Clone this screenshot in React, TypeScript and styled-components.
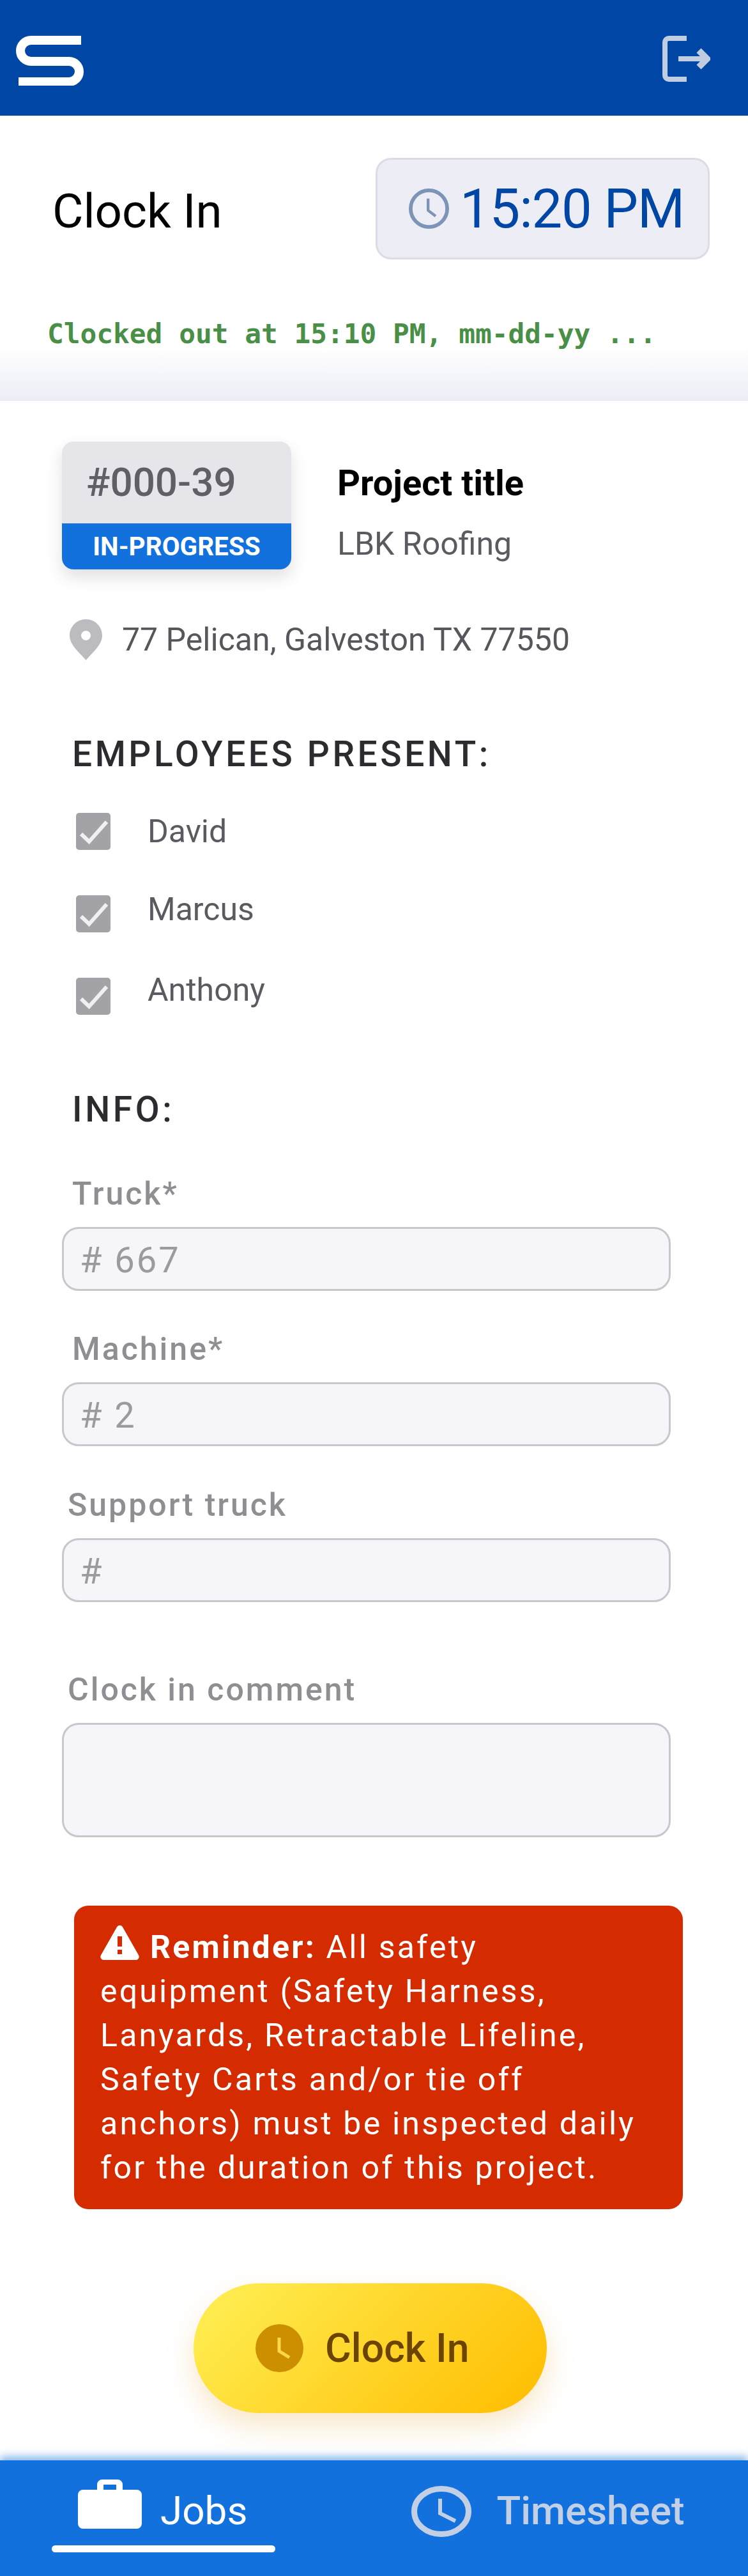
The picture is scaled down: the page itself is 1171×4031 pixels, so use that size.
import styled, { createGlobalStyle } from "styled-components";

const GlobalStyle = createGlobalStyle`
  * {
    box-sizing: border-box;
  }

  body {
    margin: 0;
    background: #fff;
    font-family: Roboto, "Liberation Sans", sans-serif;
  }
`;

const Page = styled.div`
  width: 1171px;
  min-height: 4031px;
  display: flex;
  flex-direction: column;
`;

const Header = styled.header`
  height: 181px;
  padding: 56px 59px 0 25px;
  display: flex;
  align-items: flex-start;
  justify-content: space-between;
  background: #0047a5;
`;

const TitleRow = styled.div`
  padding: 66px 60px 0 82px;
  display: flex;
  align-items: center;
  justify-content: space-between;
`;

const Title = styled.h1`
  margin: 8px 0 0;
  font-size: 74.5px;
  line-height: 90px;
  font-weight: 400;
  color: #000;
`;

const TimeBox = styled.div`
  width: 523px;
  height: 159px;
  padding: 0 0 0 49px;
  display: flex;
  align-items: center;
  gap: 17px;
  background: #ecedf5;
  border: 3px solid #dcdce6;
  border-radius: 24px;
`;

const TimeText = styled.span`
  font-size: 85px;
  line-height: 100px;
  letter-spacing: -1.2px;
  color: #0047a5;
  white-space: nowrap;
`;

const StatusBar = styled.div`
  height: 221px;
  padding: 91px 0 0 74px;
  background: linear-gradient(#fff 62%, #eceef6 100%);
  border-bottom: 1px solid #e4e5ec;
`;

const StatusText = styled.p`
  margin: 0;
  font-family: "DejaVu Sans Mono", "Liberation Mono", monospace;
  font-size: 42.8px;
  line-height: 50px;
  font-weight: 700;
  color: #4a8f47;
  white-space: nowrap;
`;

const Body = styled.main`
  flex: 1;
  padding: 64px 0 0 97px;
`;

const ProjectRow = styled.div`
  display: flex;
  gap: 72px;
`;

const ProjectCard = styled.div`
  width: 359px;
  height: 200px;
  display: flex;
  flex-direction: column;
  border-radius: 18px;
  overflow: hidden;
  box-shadow: 0 12px 24px rgba(60, 60, 80, 0.16);
`;

const ProjectNumber = styled.div`
  height: 128px;
  padding: 0 0 2px 38px;
  display: flex;
  align-items: center;
  background: #e5e5ea;
  font-size: 62px;
  font-weight: 500;
  color: #5f5f66;
`;

const ProjectStatus = styled.div`
  flex: 1;
  display: flex;
  align-items: center;
  justify-content: center;
  background: #1271dc;
  font-size: 40.5px;
  font-weight: 700;
  color: #fff;
`;

const ProjectInfo = styled.div`
  padding-top: 33px;
`;

const ProjectTitle = styled.div`
  font-size: 56px;
  line-height: 64px;
  font-weight: 700;
  color: #000;
`;

const ProjectClient = styled.div`
  margin-top: 33px;
  font-size: 50px;
  line-height: 60px;
  color: #5a5a60;
`;

const AddressRow = styled.div`
  margin-top: 78px;
  padding-left: 12px;
  display: flex;
  align-items: center;
  gap: 31px;
  font-size: 50px;
  line-height: 64px;
  color: #56565c;
`;

const SectionTitle = styled.h2<{ $top: number }>`
  margin: ${(p) => p.$top}px 0 0 16px;
  font-size: 55px;
  line-height: 60px;
  font-weight: 500;
  letter-spacing: 4.6px;
  color: #2c2c30;
`;

const EmployeeList = styled.div`
  margin-top: 61px;
  padding-left: 22px;
  display: flex;
  flex-direction: column;
  gap: 70px;
`;

const EmployeeRow = styled.label`
  height: 59px;
  display: flex;
  align-items: center;
  gap: 58px;
`;

const CheckBox = styled.span`
  width: 54px;
  height: 58px;
  display: flex;
  background: #a3a3a7;
  border-radius: 5px;
`;

const EmployeeName = styled.span<{ $lift: number }>`
  padding-bottom: ${(p) => p.$lift}px;
  font-size: 50px;
  line-height: 60px;
  color: #5a5a60;
`;

const FieldLabel = styled.label<{ $top: number; $indent: number }>`
  display: block;
  margin: ${(p) => p.$top}px 0 27px ${(p) => p.$indent}px;
  font-size: 50px;
  line-height: 50px;
  font-weight: 500;
  letter-spacing: 3px;
  color: #8e8e93;
`;

const FieldInput = styled.input`
  display: block;
  width: 953px;
  height: 100px;
  padding: 4px 25px 0;
  background: #f6f5f9;
  border: 3px solid #c7c7cc;
  border-radius: 26px;
  outline: none;
  font-family: inherit;
  font-size: 56px;
  letter-spacing: 3px;
  color: #9a9a9f;
`;

const FieldArea = styled.textarea`
  display: block;
  width: 953px;
  height: 179px;
  background: #f6f5f9;
  border: 3px solid #c7c7cc;
  border-radius: 26px;
  outline: none;
  resize: none;
`;

const Reminder = styled.p`
  width: 953px;
  margin: 107px 0 0 19px;
  padding: 30px 70px 30px 41px;
  background: #d42c00;
  border-radius: 22px;
  font-size: 50px;
  line-height: 69px;
  letter-spacing: 3.2px;
  color: #fff;

  strong {
    font-weight: 700;
  }

  svg {
    margin-right: 17px;
    vertical-align: -3px;
  }
`;

const ClockButton = styled.button`
  width: 553px;
  height: 203px;
  margin: 116px 0 74px 206px;
  padding: 0 0 0 97px;
  display: flex;
  align-items: center;
  gap: 34px;
  border: none;
  border-radius: 102px;
  background: linear-gradient(135deg, #ffeb4d 10%, #ffc107 90%);
  box-shadow: 0 20px 44px rgba(230, 170, 60, 0.28);
  font-family: inherit;
  font-size: 62.5px;
  font-weight: 500;
  color: #6b4500;
`;

const TabBar = styled.nav`
  height: 182px;
  padding: 30px 0 0 81px;
  display: flex;
  gap: 172px;
  background: #1271dc;
  box-shadow: 0 -6px 12px rgba(18, 113, 220, 0.5);
`;

const Tab = styled.div`
  display: flex;
  flex-direction: column;
`;

const TabRow = styled.div<{ $gap: number }>`
  height: 90px;
  padding: 0 44px 0 41px;
  display: flex;
  align-items: center;
  gap: ${(p) => p.$gap}px;
`;

const TabLabel = styled.span<{ $active?: boolean }>`
  padding-top: 8px;
  font-size: 62px;
  line-height: 62px;
  font-weight: ${(p) => (p.$active ? 400 : 500)};
  color: ${(p) => (p.$active ? "#fff" : "#c2cfe4")};
`;

const TabMark = styled.div`
  height: 11px;
  margin-top: 13px;
  background: #fff;
  border-radius: 6px;
`;

const TabIcon = styled.svg<{ $top?: number; $bottom?: number }>`
  flex: none;
  margin-top: ${(p) => p.$top ?? 0}px;
  margin-bottom: ${(p) => p.$bottom ?? 0}px;
`;

const Logo = () => (
  <svg width="106" height="78" viewBox="25 56 106 78" fill="none" stroke="#fff" strokeWidth="14">
    <path d="M127 63H48.5A16.5 16.5 0 0 0 48.5 96H108A16 16 0 0 1 108 128H29" />
  </svg>
);

const LogoutIcon = () => (
  <svg width="75" height="72" viewBox="1037 56 75 72" fill="none" stroke="#c0cce0">
    <path d="M1075 60H1047a6 6 0 0 0-6 6V118a6 6 0 0 0 6 6H1075" strokeWidth="8" />
    <path d="M1062 92H1106" strokeWidth="8" />
    <path d="M1094 79L1107 92L1094 105" strokeWidth="10" />
  </svg>
);

const TimeClock = () => (
  <svg width="63" height="63" viewBox="0 0 24 24" fill="none" stroke="#7c94b5" strokeWidth="2.2">
    <circle cx="12" cy="12" r="10.9" />
    <path d="M11.5 6V13L16 16.5" strokeWidth="1.65" />
  </svg>
);

const PinIcon = () => (
  <svg width="51" height="64" viewBox="0 0 51 64">
    <path
      fillRule="evenodd"
      fill="#bcbcc0"
      d="M25.5 0C11.4 0 0 11.4 0 25.5 0 40 15 52 25.5 64 36 52 51 40 51 25.5 51 11.4 39.6 0 25.5 0ZM25.5 18a7.5 7.5 0 1 1 0 15 7.5 7.5 0 0 1 0-15Z"
    />
  </svg>
);

const CheckIcon = () => (
  <svg width="54" height="58" viewBox="0 0 54 58" fill="none" stroke="#f0f0f2" strokeWidth="6">
    <path d="M8 33L20.5 45L48 14" />
  </svg>
);

const WarningIcon = () => (
  <svg width="61" height="55" viewBox="0 0 61 55">
    <path
      fillRule="evenodd"
      fill="#fff"
      d="M26 3.5a5 5 0 0 1 9 0L60 47.5A5 5 0 0 1 56 55H5A5 5 0 0 1 1 47.5ZM27 18V34H34V18ZM27 39V46H34V39Z"
    />
  </svg>
);

const ButtonClock = () => (
  <svg width="75" height="75" viewBox="0 0 75 75">
    <circle cx="37.5" cy="37.5" r="37.5" fill="#cc8f00" />
    <path d="M37 21V42L53 52" fill="none" stroke="#ffd84a" strokeWidth="5" />
  </svg>
);

const BriefcaseIcon = () => (
  <TabIcon $bottom={13} width="100" height="77" viewBox="0 0 100 77">
    <path
      fillRule="evenodd"
      fill="#fff"
      d="M30 16V8a8 8 0 0 1 8-8H62a8 8 0 0 1 8 8V16H92a8 8 0 0 1 8 8V69a8 8 0 0 1-8 8H8a8 8 0 0 1-8-8V24a8 8 0 0 1 8-8ZM40 16H60V8H40Z"
    />
  </TabIcon>
);

const TabClock = () => (
  <TabIcon $top={9} width="94" height="80" viewBox="0 0 94 80" fill="none" stroke="#c2cfe4">
    <ellipse cx="47" cy="40" rx="42.5" ry="35.5" strokeWidth="9" />
    <path d="M45 20V43L69 55" strokeWidth="6" />
  </TabIcon>
);

const employees = [
  { name: "David", lift: 0 },
  { name: "Marcus", lift: 14 },
  { name: "Anthony", lift: 20 },
];

const App = () => {
  return (
    <Page>
      <GlobalStyle />
      <Header>
        <Logo />
        <LogoutIcon />
      </Header>

      <TitleRow>
        <Title>Clock In</Title>
        <TimeBox>
          <TimeClock />
          <TimeText>15:20 PM</TimeText>
        </TimeBox>
      </TitleRow>

      <StatusBar>
        <StatusText>Clocked out at 15:10 PM, mm-dd-yy ...</StatusText>
      </StatusBar>

      <Body>
        <ProjectRow>
          <ProjectCard>
            <ProjectNumber>#000-39</ProjectNumber>
            <ProjectStatus>IN-PROGRESS</ProjectStatus>
          </ProjectCard>
          <ProjectInfo>
            <ProjectTitle>Project title</ProjectTitle>
            <ProjectClient>LBK Roofing</ProjectClient>
          </ProjectInfo>
        </ProjectRow>

        <AddressRow>
          <PinIcon />
          77 Pelican, Galveston TX 77550
        </AddressRow>

        <SectionTitle $top={117}>EMPLOYEES PRESENT:</SectionTitle>
        <EmployeeList>
          {employees.map((employee) => (
            <EmployeeRow key={employee.name}>
              <CheckBox>
                <CheckIcon />
              </CheckBox>
              <EmployeeName $lift={employee.lift}>{employee.name}</EmployeeName>
            </EmployeeRow>
          ))}
        </EmployeeList>

        <SectionTitle $top={118}>INFO:</SectionTitle>

        <FieldLabel $top={77} $indent={16}>Truck*</FieldLabel>
        <FieldInput readOnly defaultValue="# 667" />
        <FieldLabel $top={66} $indent={16}>Machine*</FieldLabel>
        <FieldInput readOnly defaultValue="# 2" />
        <FieldLabel $top={67} $indent={9}>Support truck</FieldLabel>
        <FieldInput readOnly defaultValue="#" />
        <FieldLabel $top={112} $indent={9}>Clock in comment</FieldLabel>
        <FieldArea readOnly />

        <Reminder>
          <WarningIcon />
          <strong>Reminder:</strong> All safety equipment (Safety Harness, Lanyards, Retractable Lifeline, Safety Carts
          and/or tie off anchors) must be inspected daily for the duration of this project.
        </Reminder>

        <ClockButton>
          <ButtonClock />
          Clock In
        </ClockButton>
      </Body>

      <TabBar>
        <Tab>
          <TabRow $gap={29}>
            <BriefcaseIcon />
            <TabLabel $active>Jobs</TabLabel>
          </TabRow>
          <TabMark />
        </Tab>
        <Tab>
          <TabRow $gap={39}>
            <TabClock />
            <TabLabel>Timesheet</TabLabel>
          </TabRow>
        </Tab>
      </TabBar>
    </Page>
  );
};

export default App;
